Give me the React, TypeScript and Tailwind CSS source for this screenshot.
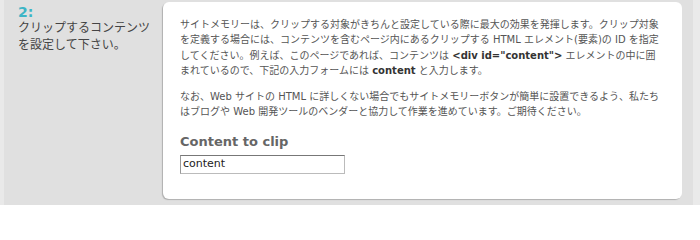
import React from "react";

export default function App() {
  const font = { fontFamily: '"DejaVu Sans", "Noto Sans CJK JP", sans-serif' };
  return (
    <div
      className="flex w-[700px] h-[205px] bg-[#e0e0e0] overflow-hidden"
      style={font}
    >
      <div className="w-[4px] shrink-0 bg-[#e9e9e9]" />
      <div className="w-[159px] shrink-0 pl-[14px] pt-[3px]">
        <div className="text-[14px] font-bold leading-[18px] text-[#3db5c6]">2:</div>
        <div className="text-[12px] leading-[17px] text-[#444] tracking-[0px] whitespace-nowrap mt-[-1px]">
          クリップするコンテンツ
          <br />
          を設定して下さい。
        </div>
      </div>
      <div className="w-[519px] shrink-0 mt-[2px] mb-[6px] bg-white rounded-[6px] shadow-[-1px_1px_1px_rgba(0,0,0,0.22)] pl-[17px] pt-[15px]">
        <p className="text-[10px] leading-[15.3px] text-[#555] whitespace-nowrap">
          サイトメモリーは、クリップする対象がきちんと設定している際に最大の効果を発揮します。クリップ対象
          <br />
          を定義する場合には、コンテンツを含むページ内にあるクリップする HTML エレメント(要素)の ID を指定
          <br />
          してください。例えば、このページであれば、コンテンツは <b className="font-bold text-[#333]">&lt;div id="content"&gt;</b> エレメントの中に囲
          <br />
          まれているので、下記の入力フォームには <b className="font-bold text-[#333]">content</b> と入力します。
        </p>
        <p className="mt-[11px] text-[10px] leading-[15.3px] text-[#555] whitespace-nowrap">
          なお、Web サイトの HTML に詳しくない場合でもサイトメモリーボタンが簡単に設置できるよう、私たち
          <br />
          はブログや Web 開発ツールのベンダーと協力して作業を進めています。ご期待ください。
        </p>
        <div className="mt-[14px] text-[13px] font-bold leading-[16px] text-[#666]">Content to clip</div>
        <div className="mt-[5px] w-[165px] h-[19px] border border-[#bbb] border-t-[#777] border-l-[#999] bg-white flex items-center pl-[2px] text-[11px] text-[#222]">
          content
        </div>
      </div>
      <div className="w-[11px] shrink-0" />
      <div className="flex-1 bg-[#eaeaea]" />
    </div>
  );
}
